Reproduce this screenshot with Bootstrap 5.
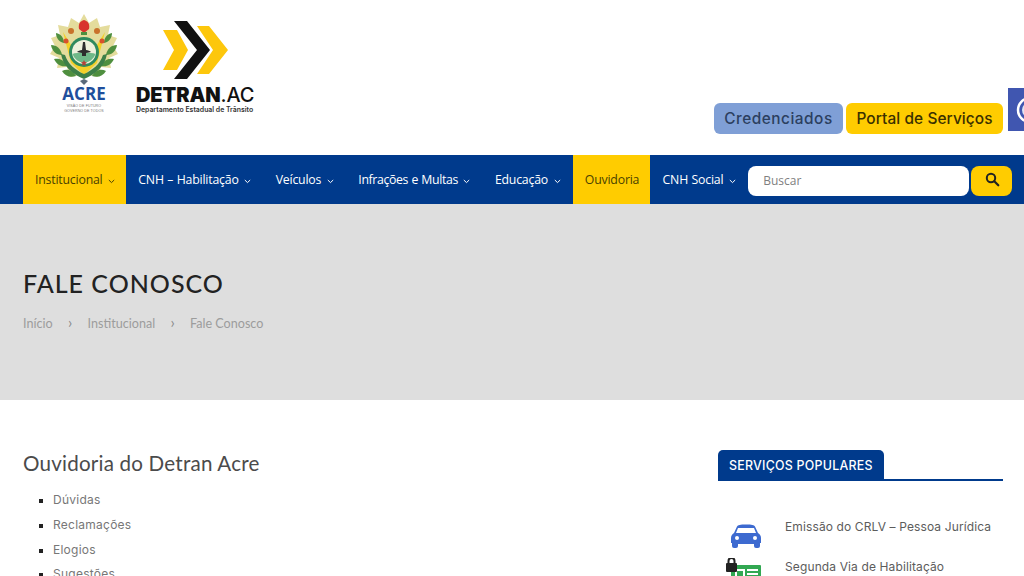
<!DOCTYPE html>
<html lang="pt-BR">
<head>
  <meta charset="UTF-8" />
  <meta name="viewport" content="width=device-width, initial-scale=1.0"/>
  <title>Fale Conosco - Detran Acre</title>
  <link href="https://cdn.jsdelivr.net/npm/bootstrap@5.3.6/dist/css/bootstrap.min.css" rel="stylesheet" />
  <style>
    html, body { height: 576px; overflow: hidden; }
    body { font-family: "Inter", "Liberation Sans", sans-serif; color: #555; background: #fff; }

    .site-header { height: 155px; padding-left: 50px; }
    .logo-acre { width: 68px; margin-top: 14px; text-align: center; }
    .logo-acre svg { display: block; }
    .logo-acre .name { font: 700 17px/18px "Open Sans", sans-serif; color: #1f4f9c; margin-top: -1px; }
    .logo-acre .motto { font: 3.6px/4.5px "Liberation Sans", sans-serif; color: #777; letter-spacing: .1px; margin-top: 1px; }
    .logo-detran { margin: 21px 0 0 18px; width: 118px; }
    .logo-detran svg { margin-left: 27px; }
    .logo-detran .name { font: 900 20px/1 "Inter", sans-serif; color: #111; letter-spacing: -.1px; white-space: nowrap; margin-top: 6px; }
    .logo-detran .name span { font-weight: 500; }
    .logo-detran .sub { font: 600 6.9px/9px "Inter", sans-serif; color: #333; white-space: nowrap; }

    .top-actions { margin-right: -21px; padding-top: 103px; }
    .btn-top { height: 31px; font-size: 15.4px; font-weight: 500; line-height: 31px; padding: 0; border-radius: 6px; border: 0; text-align: center; }
    .btn-cred { width: 129px; background: #7f9fd6; color: #2c3f5f; letter-spacing: .5px; }
    .btn-portal { width: 157px; background: #ffcc00; color: #3a3000; letter-spacing: .1px; margin-left: 3px; }
    .access-box { width: 37px; height: 43px; background: #4056b0; margin-left: 5px; margin-top: -15px; padding: 8px 0 0 8px; }

    .main-nav { height: 49px; background: #003a8c; padding-left: 23px; }
    .main-nav .nav-link { height: 49px; padding: 0 12.3px; font: 12.3px/50px "Open Sans", sans-serif; color: #fff; letter-spacing: -.2px; word-spacing: .5px; white-space: nowrap; }
    .main-nav .nav-link.active { padding: 0 11px 0 12px; background: #ffcc00; color: #4a4200; }
    .main-nav .nav-link.tight { letter-spacing: -.36px; }
    .main-nav svg { margin-left: 2px; vertical-align: 0; }
    .search-box { margin-top: 2px; }
    .search-box input { width: 221px; height: 30px; border: 0; border-radius: 8px; padding: 0 15px; font: 12px "Open Sans", sans-serif; color: #777; }
    .search-box input::placeholder { color: #808080; opacity: 1; }
    .search-box button { width: 41px; height: 30px; border: 0; border-radius: 8px; background: #ffcc00; margin-left: 2px; padding: 0; }

    .hero { height: 196px; background: #dedede; padding: 64px 23px 0; }
    .hero h1 { font: 500 25px/30px "Lato", sans-serif; color: #222; letter-spacing: 1px; margin-bottom: 16px; }
    .hero .trail { font: 12.6px/16px "Lato", sans-serif; color: #9c9c9c; }
    .hero .trail a { color: #9c9c9c; text-decoration: none; }
    .hero .sep { color: #8a8a8a; font-size: 15px; margin: 0 15.3px; }

    .content { padding: 50px 21px 0 23px; }
    .content h2 { font: 400 20.6px/26px "Lato", sans-serif; color: #4b4b4b; letter-spacing: .2px; margin: 0 0 11px; }
    .content ul { list-style: square; padding-left: 30px; margin: 0; font-size: 12px; color: #777; }
    .content li { height: 24.8px; line-height: 25px; letter-spacing: .25px; }
    .content li::marker { color: #222; font-size: 11px; }

    .side { width: 285px; }
    .side-title { border-bottom: 2px solid #003a8c; height: 31px; margin-bottom: 37px; }
    .side-title span { display: inline-block; height: 30px; padding: 0 11px; background: #003a8c; color: #fff; border-radius: 5px 5px 0 0; font-size: 12.4px; font-weight: 500; line-height: 31px; letter-spacing: .25px; }
    .service { height: 40px; font-size: 12px; line-height: 18px; color: #5c5c5c; letter-spacing: .12px; }
    .service .ico { width: 67px; flex: none; }
    .service .ico svg { display: block; }
    .ico-car { padding: 6px 0 0 12px; }
    .ico-id { padding: 0 0 0 8px; }
  </style>
</head>
<body>
  <header class="site-header d-flex justify-content-between">
    <div class="d-flex">
      <div class="logo-acre">
        <svg width="68" height="72" viewBox="0 0 68 72">
          <!-- brasao do Acre -->
          <path d="M34 0l5 9 8-5 3 9 10-2-2 10 9 3-4 8 5 8-9 4 2 10-10-1-3 10-14-3-14 3-3-10-10 1 2-10-9-4 5-8-4-8 9-3-2-10 10 2 3-9 8 5z" fill="#e4dc9c"/>
          <g fill="#4f8f3f">
            <path d="M1 31c6 0 10 4 11 10-6 0-10-4-11-10z"/><path d="M67 31c-6 0-10 4-11 10 6 0 10-4 11-10z"/>
            <path d="M4 45c6-1 10 1 13 7-6 1-10-1-13-7z"/><path d="M64 45c-6-1-10 1-13 7 6 1 10-1 13-7z"/>
            <path d="M12 57c6-3 11 0 14 5-6 2-11 0-14-5z"/><path d="M56 57c-6-3-11 0-14 5 6 2 11 0 14-5z"/>
            <path d="M6 19c5 1 8 5 8 10-5-1-8-5-8-10z"/><path d="M62 19c-5 1-8 5-8 10 5-1 8-5 8-10z"/>
          </g>
          <path d="M13 18l8 31 13 12 13-12 8-31-8 13-13 13-13-13z" fill="#f3d029"/>
          <path d="M11 40c2 12 11 20 23 25 12-5 21-13 23-25l-4 1c-3 9-10 15-19 19-9-4-16-10-19-19z" fill="#3d7f48"/>
          <circle cx="34" cy="38" r="15" fill="#2f8a5e"/>
          <circle cx="34" cy="38" r="12" fill="#eef1dc"/>
          <path d="M22.500 40c4-2 19-2 23 0a12 12 0 0 1-23 0z" fill="#6fb888"/>
          <path d="M33 28h2l1 8c2 0 4 1 5 2l-5 1v3h-4v-3l-5-1c1-1 3-2 5-2z" fill="#2d2d2d"/>
          <path d="M34 46l1 2 2 .3-1.500 1.500.4 2-1.900-1-1.900 1 .4-2-1.500-1.500 2-.3z" fill="#b4433a"/>
          <path d="M34 6c-4 1-6 4-5 9l5 4 5-4c1-5-1-8-5-9z" fill="#d8332c"/>
          <path d="M31 18h6v3h-6z" fill="#4f8f3f"/>
          <circle cx="21" cy="17" r="3" fill="#c9722b"/><circle cx="47" cy="17" r="3" fill="#c9722b"/>
          <circle cx="16" cy="27" r="2.500" fill="#d8512c"/><circle cx="52" cy="27" r="2.500" fill="#d8512c"/>
          <path d="M30 67l4-2 4 2-4 4z" fill="#5a6a7a"/>
        </svg>
        <div class="name">ACRE</div>
        <div class="motto">VISÃO DE FUTURO<br>GOVERNO DE TODOS</div>
      </div>
      <div class="logo-detran">
        <svg width="66" height="58" viewBox="0 0 66 58" class="d-block">
          <path d="M0 9h14l11 20-11 20H0l11-20z" fill="#fdc70c"/>
          <path d="M34 5h12l19 24-19 24H34l16-24z" fill="#fdc70c"/>
          <path d="M11 0h13l23 29-23 29H11l23-29z" fill="#111"/>
        </svg>
        <div class="name">DETRAN<span>.AC</span></div>
        <div class="sub">Departamento Estadual de Trânsito</div>
      </div>
    </div>
    <div class="top-actions d-flex align-items-start">
      <a href="#" class="btn btn-top btn-cred">Credenciados</a>
      <a href="#" class="btn btn-top btn-portal">Portal de Serviços</a>
      <div class="access-box">
        <svg width="28" height="28" viewBox="0 0 28 28"><circle cx="14" cy="14" r="12" fill="none" stroke="#fff" stroke-width="2.500"/><circle cx="14" cy="14" r="8" fill="#dfe4f5"/></svg>
      </div>
    </div>
  </header>

  <nav class="main-nav d-flex align-items-center">
    <a class="nav-link active" href="#">Institucional <svg width="7" height="5" viewBox="0 0 7 5"><path d="M.8 1l2.700 2.600L6.200 1" fill="none" stroke="currentColor"/></svg></a>
    <a class="nav-link" href="#">CNH – Habilitação <svg width="7" height="5" viewBox="0 0 7 5"><path d="M.8 1l2.700 2.600L6.200 1" fill="none" stroke="currentColor"/></svg></a>
    <a class="nav-link" href="#">Veículos <svg width="7" height="5" viewBox="0 0 7 5"><path d="M.8 1l2.700 2.600L6.200 1" fill="none" stroke="currentColor"/></svg></a>
    <a class="nav-link tight" href="#">Infrações e Multas <svg width="7" height="5" viewBox="0 0 7 5"><path d="M.8 1l2.700 2.600L6.200 1" fill="none" stroke="currentColor"/></svg></a>
    <a class="nav-link" href="#">Educação <svg width="7" height="5" viewBox="0 0 7 5"><path d="M.8 1l2.700 2.600L6.200 1" fill="none" stroke="currentColor"/></svg></a>
    <a class="nav-link active" href="#">Ouvidoria</a>
    <a class="nav-link" href="#">CNH Social <svg width="7" height="5" viewBox="0 0 7 5"><path d="M.8 1l2.700 2.600L6.200 1" fill="none" stroke="currentColor"/></svg></a>
    <form class="search-box d-flex">
      <input type="text" placeholder="Buscar">
      <button type="button" aria-label="Buscar">
        <svg width="15" height="15" viewBox="0 0 15 15"><circle cx="6" cy="6" r="4.200" fill="none" stroke="#222" stroke-width="2"/><path d="M9.300 9.300l4 4" stroke="#222" stroke-width="2.200" stroke-linecap="round"/></svg>
      </button>
    </form>
  </nav>

  <section class="hero">
    <h1>FALE CONOSCO</h1>
    <div class="trail">
      <a href="#">Início</a><span class="sep">›</span><a href="#">Institucional</a><span class="sep">›</span><span>Fale Conosco</span>
    </div>
  </section>

  <main class="content d-flex justify-content-between">
    <div>
      <h2>Ouvidoria do Detran Acre</h2>
      <ul>
        <li>Dúvidas</li>
        <li>Reclamações</li>
        <li>Elogios</li>
        <li>Sugestões</li>
      </ul>
    </div>
    <aside class="side">
      <div class="side-title"><span>SERVIÇOS POPULARES</span></div>
      <div class="service d-flex">
        <div class="ico ico-car">
          <svg width="32" height="24" viewBox="0 0 32 24"><path d="M7 2.500C8 1 10 .5 16 .5s8 .5 9 2L28 9c2 1 3 3 3 5v5h-1v3a2 2 0 0 1-2 2h-2a2 2 0 0 1-2-2v-2H8v2a2 2 0 0 1-2 2H4a2 2 0 0 1-2-2v-3H1v-5c0-2 1-4 3-5z" fill="#3d6ad0"/><path d="M8 4h16l2 5H6z" fill="#fff"/><circle cx="7" cy="14" r="2" fill="#fff"/><circle cx="25" cy="14" r="2" fill="#fff"/></svg>
        </div>
        <div>Emissão do CRLV – Pessoa Jurídica</div>
      </div>
      <div class="service d-flex">
        <div class="ico ico-id">
          <svg width="36" height="24" viewBox="0 0 36 24"><rect x="5" y="7" width="30" height="18" rx="1" fill="#32a852"/><rect x="9" y="11" width="10" height="10" fill="#fff"/><rect x="11" y="13" width="6" height="6" fill="#32a852"/><path d="M21 12h11M21 16h11" stroke="#fff" stroke-width="2"/><rect x="0" y="5" width="11" height="9" rx="1" fill="#222"/><path d="M2.500 5V3a3 3 0 0 1 6 0v2" fill="none" stroke="#222" stroke-width="2"/></svg>
        </div>
        <div>Segunda Via de Habilitação</div>
      </div>
    </aside>
  </main>

  <script src="https://cdn.jsdelivr.net/npm/bootstrap@5.3.6/dist/js/bootstrap.bundle.min.js"></script>
</body>
</html>
